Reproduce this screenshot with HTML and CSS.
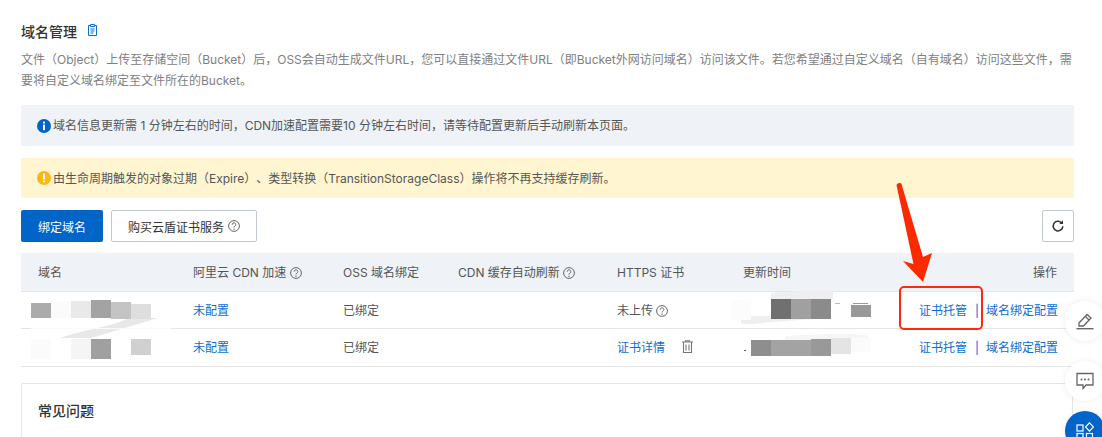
FILE: index.html
```html
<!DOCTYPE html>
<html lang="zh-CN">
<head>
<meta charset="utf-8">
<title>域名管理</title>
<link rel="stylesheet" href="styles.css">
</head>
<body>
<main class="page">
  <h2 class="title">域名管理
    <svg class="doc-icon" viewBox="0 0 11 12" width="11" height="12"><path d="M1.500 1.500h2M7.500 1.500h2v10h-8v-10M3.500.5h4v2h-4zM3.500 5h4M3.500 7h4M3.500 9h3" fill="none" stroke="#0a6fd0" stroke-width="1"/></svg>
  </h2>
  <p class="desc">文件（Object）上传至存储空间（Bucket）后，OSS会自动生成文件URL，您可以直接通过文件URL（即Bucket外网访问域名）访问该文件。若您希望通过自定义域名（自有域名）访问这些文件，需要将自定义域名绑定至文件所在的Bucket。</p>

  <div class="alert alert-info">
    <svg class="alert-icon" viewBox="0 0 14 14" width="14" height="14"><circle cx="7" cy="7" r="7" fill="#0064c8"/><circle cx="7" cy="3.600" r="1.100" fill="#fff"/><rect x="6" y="5.600" width="2" height="5.600" fill="#fff"/></svg>
    <span>域名信息更新需 1 分钟左右的时间，CDN加速配置需要10 分钟左右时间，请等待配置更新后手动刷新本页面。</span>
  </div>
  <div class="alert alert-warn">
    <svg class="alert-icon" viewBox="0 0 14 14" width="14" height="14"><circle cx="7" cy="7" r="7" fill="#fdb912"/><rect x="6" y="2.600" width="2" height="5.800" fill="#fff"/><circle cx="7" cy="10.500" r="1.100" fill="#fff"/></svg>
    <span>由生命周期触发的对象过期（Expire）、类型转换（TransitionStorageClass）操作将不再支持缓存刷新。</span>
  </div>

  <div class="toolbar">
    <button class="btn btn-primary">绑定域名</button>
    <button class="btn btn-default">购买云盾证书服务
      <svg class="help" viewBox="0 0 12 12" width="12" height="12"><use href="#q"/></svg>
    </button>
    <button class="btn btn-icon" aria-label="刷新">
      <svg viewBox="0 0 14 14" width="14" height="14"><path d="M11.800 7.200a4.800 4.800 0 1 1-1.400-3.500" fill="none" stroke="#333" stroke-width="1.500"/><path d="M12 1.200v3.800H8.200z" fill="#333"/></svg>
    </button>
  </div>

  <div class="table">
    <div class="row head">
      <div>域名</div>
      <div>阿里云 CDN 加速 <svg class="help" viewBox="0 0 12 12" width="12" height="12"><use href="#q"/></svg></div>
      <div>OSS 域名绑定</div>
      <div>CDN 缓存自动刷新 <svg class="help" viewBox="0 0 12 12" width="12" height="12"><use href="#q"/></svg></div>
      <div>HTTPS 证书</div>
      <div>更新时间</div>
      <div class="right">操作</div>
    </div>
    <div class="row">
      <div></div>
      <div><a class="link">未配置</a></div>
      <div>已绑定</div>
      <div></div>
      <div>未上传 <svg class="help" viewBox="0 0 12 12" width="12" height="12"><use href="#q"/></svg></div>
      <div></div>
      <div class="right"><a class="link">证书托管</a><span class="sep">|</span><a class="link">域名绑定配置</a></div>
    </div>
    <div class="row">
      <div></div>
      <div><a class="link">未配置</a></div>
      <div>已绑定</div>
      <div></div>
      <div class="cert"><a class="link">证书详情</a>
        <svg class="trash" viewBox="0 0 11 13" width="11" height="13"><path d="M0 2h11M3.500 2V.7h4V2M1.500 2.500v10h8v-10M4 4.500v6M7 4.500v6" fill="none" stroke="#777" stroke-width="1.100"/></svg>
      </div>
      <div></div>
      <div class="right"><a class="link">证书托管</a><span class="sep">|</span><a class="link">域名绑定配置</a></div>
    </div>
  </div>

  <section class="card">
    <h3 class="card-title">常见问题</h3>
  </section>
</main>

<svg class="overlay" viewBox="0 0 1102 437" width="1102" height="437">
  <defs>
    <g id="q">
      <circle cx="6" cy="6" r="5.400" fill="none" stroke="#666" stroke-width="1"/>
      <path d="M4.200 4.700a1.800 1.800 0 1 1 2.800 1.400c-.7.400-1 .7-1 1.400" fill="none" stroke="#666" stroke-width="1"/>
      <circle cx="6" cy="9.200" r=".7" fill="#666"/>
    </g>
  </defs>
  <!-- smears -->
  <path d="M60 338C90 328 115 326 128 318H158L128 327C110 332 100 336 90 338Z" fill="#e8e8e8"/>
  <rect x="31" y="328" width="140" height="1" fill="#fafafa"/>
  <path d="M771 293C800 291 820 290 833 291V299H771Z" fill="#efefef"/>
  <path d="M741 322C741 325 748 325 770 322L831 318V316H741Z" fill="#eee"/>
  <path d="M785 336C810 334 860 332 868 336L871 350H785Z" fill="#f6f6f6"/>
  <!-- mosaics -->
  <rect x="31" y="303" width="20" height="15" fill="#ababab"/>
  <rect x="51" y="301" width="20" height="17" fill="#fbfbfb"/>
  <rect x="71" y="301" width="20" height="17" fill="#e9e9e9"/>
  <rect x="91" y="300" width="20" height="18" fill="#a3a3a3"/>
  <rect x="111" y="302" width="20" height="17" fill="#c4c4c4"/>
  <rect x="131" y="304" width="20" height="15" fill="#dedede"/>
  <rect x="31" y="339" width="20" height="20" fill="#fbfbfb"/>
  <rect x="71" y="339" width="20" height="20" fill="#f5f5f5"/>
  <rect x="91" y="339" width="20" height="20" fill="#a0a0a0"/>
  <rect x="131" y="339" width="20" height="16" fill="#d0d0d0"/>
  <rect x="731" y="300" width="20" height="20" fill="#fcfcfc"/>
  <rect x="771" y="299" width="20" height="20" fill="#707070"/>
  <rect x="791" y="299" width="20" height="20" fill="#a0a0a0"/>
  <rect x="811" y="299" width="20" height="20" fill="#8b8b8b"/>
  <rect x="851" y="305" width="20" height="12" fill="#999"/>
  <rect x="835" y="303" width="5" height="1" fill="#bbb"/>
  <rect x="853" y="303" width="15" height="1" fill="#999"/>
  <rect x="744" y="350" width="2" height="1" fill="#555"/>
  <rect x="751" y="340" width="20" height="16" fill="#8e8e8e"/>
  <rect x="771" y="340" width="40" height="16" fill="#a3a3a3"/>
  <rect x="811" y="339" width="20" height="17" fill="#999"/>
  <rect x="831" y="338" width="20" height="16" fill="#e4e4e4"/>
  <rect x="851" y="338" width="20" height="14" fill="#fbfbfb"/>
  <!-- annotation -->
  <rect x="900" y="287" width="82" height="42" rx="4" fill="none" stroke="#fb2a0c" stroke-width="2"/>
  <path d="M896.500 185C897 183 900.500 182 901.500 184L923 257L932 253L923 282L903 261L913.500 264Z" fill="#fb2a00"/>
</svg>

<aside class="fab-stack">
  <button class="fab" aria-label="编辑">
    <svg viewBox="0 0 18 18" width="18" height="18"><path d="M3 11L11 2.500L15 6L7.500 14H3Z" fill="none" stroke="#666" stroke-width="1.300"/><path d="M9.500 4.500L13 8" stroke="#666" stroke-width="1.300"/><rect x="0.500" y="16" width="17" height="1.400" fill="#666"/></svg>
  </button>
  <button class="fab" aria-label="反馈">
    <svg viewBox="0 0 18 18" width="18" height="18"><path d="M1 1.500H17V13H10L7 16.500V13H1Z" fill="none" stroke="#666" stroke-width="1.300"/><circle cx="5.500" cy="7.500" r="1" fill="#666"/><circle cx="9" cy="7.500" r="1" fill="#666"/><circle cx="12.500" cy="7.500" r="1" fill="#666"/></svg>
  </button>
  <button class="fab fab-primary" aria-label="应用">
    <svg viewBox="0 0 18 18" width="18" height="18"><rect x="1" y="3" width="6" height="6" fill="none" stroke="#fff" stroke-width="1.200"/><path d="M13.500 .8L17.500 5L13.500 9.200L9.500 5Z" fill="none" stroke="#fff" stroke-width="1.200"/><rect x="1" y="11.500" width="6" height="6" fill="none" stroke="#fff" stroke-width="1.200"/><rect x="10.500" y="11.500" width="6" height="6" fill="none" stroke="#fff" stroke-width="1.200"/></svg>
  </button>
</aside>
</body>
</html>
```
FILE: styles.css
```css
* { box-sizing: border-box; }
html, body { margin: 0; height: 437px; overflow: hidden; background: #fff; }
body {
  position: relative;
  font-family: Inter, "Noto Sans CJK SC", sans-serif;
  font-size: 12px;
  color: #333;
  text-spacing-trim: space-all;
}
.page { height: 437px; overflow: hidden; padding: 22px 28px 0 21px; }
.title {
  display: flex;
  align-items: center;
  gap: 10px;
  margin: 0;
  height: 18px;
  font-size: 14px;
  font-weight: 500;
  color: #333;
}
.doc-icon { margin-top: -3px; }
.desc {
  margin: 9px 0 0;
  line-height: 21px;
  color: #808080;
}
.alert {
  display: flex;
  align-items: center;
  gap: 2px;
  padding-left: 16px;
  border-radius: 2px;
  color: #555;
}
.alert span { margin-top: -2px; }
.alert-info { height: 41px; margin-top: 14px; background: #eff3f8; }
.alert-warn { height: 40px; margin-top: 12px; background: #fff5d0; }
.alert-icon { flex: none; }
.toolbar { display: flex; gap: 8px; margin-top: 12px; }
.btn {
  height: 32px;
  padding: 0;
  border-radius: 2px;
  font: inherit;
}
.btn-primary { width: 82px; border: 0; background: #0064c8; color: #fff; }
.btn-default { display: flex; align-items: center; justify-content: center; gap: 4px; width: 146px; border: 1px solid #c1c7cf; background: #fff; color: #333; }
.btn-icon { display: flex; align-items: center; justify-content: center; width: 32px; margin-left: auto; border: 1px solid #c1c7cf; background: #fff; }
.table { margin-top: 11px; }
.row {
  display: grid;
  grid-template-columns: 155px 150px 115px 159px 126px 1fr 155px;
  align-items: center;
  height: 37px;
  border-bottom: 1px solid #e5e5e5;
  color: #555;
  padding-bottom: 1px;
}
.row > div { padding-left: 17px; white-space: nowrap; }
.row > div.right { padding: 0 17px 0 0; text-align: right; }
.row:last-child { height: 38px; padding-bottom: 3px; }
.head { height: 39px; background: #eff3f8; color: #555; }
.help { vertical-align: -2px; }
.link { color: #0a6fd0; }
.sep { margin: 0 7px 0 8px; color: #0064c8; }
.cert { display: flex; align-items: center; gap: 17px; }
.card {
  height: 54px;
  margin-top: 16px;
  margin-right: 1px;
  padding: 19px 16px 0;
  border: 1px solid #e5e5e5;
  border-bottom: 0;
  border-radius: 2px 2px 0 0;
}
.card-title { margin: 0; font-size: 14px; font-weight: 500; line-height: 16px; color: #333; }
.overlay { position: absolute; left: 0; top: 0; pointer-events: none; }
.fab-stack { position: absolute; left: 1065px; top: 301px; display: flex; flex-direction: column; gap: 20px; height: 136px; overflow: visible; }
.fab-stack .fab:last-child { margin-top: -10px; flex: none; }
.fab {
  display: flex;
  flex: none;
  align-items: center;
  justify-content: center;
  width: 40px;
  height: 40px;
  padding: 0;
  border: 0;
  border-radius: 50%;
  background: #fff;
  box-shadow: 0 0 6px rgba(0, 0, 0, .08);
}
.fab-primary { background: #0064c8; }
```
